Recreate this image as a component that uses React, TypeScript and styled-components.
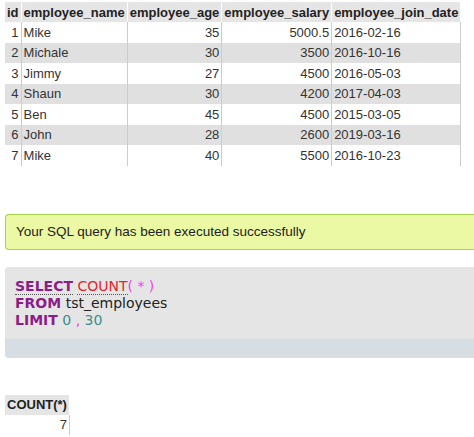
import styled, { createGlobalStyle } from "styled-components";

const Global = createGlobalStyle`
  body { margin: 0; background: #fff; font-family: "Liberation Sans", Arial, sans-serif; overflow: hidden; }
`;

const Page = styled.div`
  width: 474px;
  height: 437px;
  padding: 2px 0 0 5px;
  box-sizing: border-box;
`;

const Table = styled.table`
  border-collapse: collapse;
  font-size: 13px;
  color: #333;
`;

const Th = styled.th`
  background: #e5e5e5;
  color: #222;
  font-weight: bold;
  text-align: left;
  padding: 0 2px;
  height: 20px;
  white-space: nowrap;
  border-right: 1px solid #fff;
`;

const Tr = styled.tr<{ $alt: boolean }>`
  background: ${(p) => (p.$alt ? "#e0e0e0" : "#fff")};
`;

const Td = styled.td<{ $right?: boolean }>`
  text-align: ${(p) => (p.$right ? "right" : "left")};
  padding: 0 2px;
  height: 20.5px;
  border-right: 1px solid #ccc;
  white-space: nowrap;
`;

const Success = styled.div`
  margin-top: 48px;
  height: 36px;
  box-sizing: border-box;
  background: #ebf8a4;
  border: 1px solid #a2d246;
  border-right: none;
  border-radius: 4px 0 0 4px;
  padding: 9px 10px;
  font-size: 13.5px;
  color: #222;
`;

const SqlBox = styled.div`
  margin-top: 17px;
  background: #e5e5e5;
  border-radius: 4px 0 0 4px;
  overflow: hidden;
`;

const Code = styled.div`
  padding: 11px 10px 10px;
  font-family: "DejaVu Sans", Verdana, sans-serif;
  font-size: 14px;
  line-height: 17px;
  color: #222;
`;

const Kw = styled.span<{ $dotted?: boolean }>`
  color: #8a1d8a;
  font-weight: bold;
  border-bottom: ${(p) => (p.$dotted ? "1px dotted #555" : "none")};
`;

const Fn = styled.span`
  color: #e0262c;
  border-bottom: 1px dotted #555;
`;

const Punct = styled.span`
  color: #f03ef0;
`;

const Num = styled.span`
  color: #3a8e8e;
`;

const Strip = styled.div`
  height: 19px;
  background: #d6dde3;
`;

const CountTable = styled(Table)`
  margin-top: 37px;
`;

const rows = [
  [1, "Mike", 35, "5000.5", "2016-02-16"],
  [2, "Michale", 30, "3500", "2016-10-16"],
  [3, "Jimmy", 27, "4500", "2016-05-03"],
  [4, "Shaun", 30, "4200", "2017-04-03"],
  [5, "Ben", 45, "4500", "2015-03-05"],
  [6, "John", 28, "2600", "2019-03-16"],
  [7, "Mike", 40, "5500", "2016-10-23"],
];

export default function App() {
  return (
    <Page>
      <Global />
      <Table>
        <thead>
          <tr>
            <Th>id</Th>
            <Th>employee_name</Th>
            <Th>employee_age</Th>
            <Th>employee_salary</Th>
            <Th>employee_join_date</Th>
          </tr>
        </thead>
        <tbody>
          {rows.map((r, i) => (
            <Tr key={i} $alt={i % 2 === 1}>
              <Td $right>{r[0]}</Td>
              <Td>{r[1]}</Td>
              <Td $right>{r[2]}</Td>
              <Td $right>{r[3]}</Td>
              <Td>{r[4]}</Td>
            </Tr>
          ))}
        </tbody>
      </Table>
      <Success>Your SQL query has been executed successfully</Success>
      <SqlBox>
        <Code>
          <div>
            <Kw $dotted>SELECT</Kw> <Fn>COUNT</Fn>
            <Punct>( * )</Punct>
          </div>
          <div>
            <Kw>FROM</Kw> tst_employees
          </div>
          <div>
            <Kw>LIMIT</Kw> <Num>0</Num> <Punct>,</Punct> <Num>30</Num>
          </div>
        </Code>
        <Strip />
      </SqlBox>
      <CountTable>
        <thead>
          <tr>
            <Th>COUNT(*)</Th>
          </tr>
        </thead>
        <tbody>
          <Tr $alt={false}>
            <Td $right>7</Td>
          </Tr>
        </tbody>
      </CountTable>
    </Page>
  );
}
